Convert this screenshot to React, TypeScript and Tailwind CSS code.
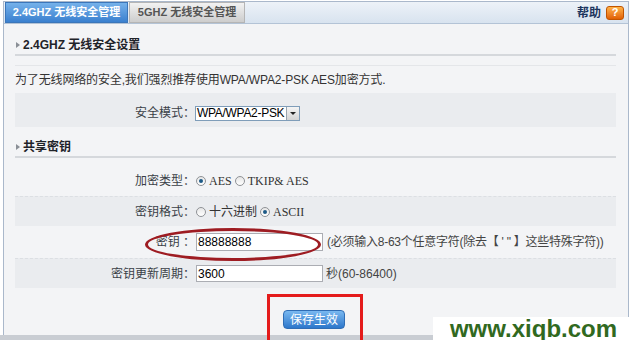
import React from "react";

const Radio: React.FC<{ checked?: boolean }> = ({ checked }) => (
  <span className="inline-flex h-[10px] w-[10px] items-center justify-center rounded-full border border-[#8f9296] bg-gradient-to-b from-[#e6e6e6] to-[#ffffff]">
    {checked && <span className="h-[4px] w-[4px] rounded-full bg-[#1d5a87]" />}
  </span>
);

const SectionTitle: React.FC<{ title: string }> = ({ title }) => (
  <div className="flex h-[18px] items-center gap-[3px] border-b-2 border-[#d5d8dc] pb-[2px] pl-[1px]">
    <span className="h-0 w-0 border-y-[3px] border-l-[4px] border-y-transparent border-l-[#8a8f96]" />
    <span className="font-bold text-[12px] text-[#1f2329]">{title}</span>
  </div>
);

const Row: React.FC<{ label: string; dark?: boolean; h: string; children: React.ReactNode }> = ({ label, dark, h, children }) => (
  <div className={`flex items-center ${h} ${dark ? "bg-[#eaecef] border-t border-dashed border-[#dcdfe3]" : ""}`}>
    <div className="w-[180px] shrink-0 text-right text-[#3a3f47]">{label}</div>
    <div className="flex items-center gap-[3px] pl-[1px]">{children}</div>
  </div>
);

const App: React.FC = () => {
  return (
    <div className="relative h-[340px] w-[634px] overflow-hidden bg-white font-['Liberation_Sans','Noto_Sans_CJK_SC',sans-serif] text-[12px] text-[#333]">
      <div className="ml-[3px] mt-[1px] w-[626px] border-x border-t border-[#aab8cb]">
        {/* tab bar */}
        <div className="flex h-[22px] items-end justify-between border-b border-[#b3c3d6] bg-gradient-to-b from-[#edf2f8] to-[#d8e3ef] pl-[1px] pr-[4px]">
          <div className="flex gap-[1px]">
            <div className="flex h-[21px] w-[123px] items-center justify-center border border-[#3b76ba] bg-gradient-to-b from-[#75b1ea] to-[#3a80cf] text-[11px] font-bold text-white">
              2.4GHZ 无线安全管理
            </div>
            <div className="flex h-[21px] w-[116px] items-center justify-center border border-[#b5b5b5] bg-gradient-to-b from-[#f2f2f2] to-[#cdcdcd] text-[11px] font-bold text-[#555]">
              5GHZ 无线安全管理
            </div>
          </div>
          <div className="flex items-center gap-[5px] self-center">
            <span className="font-bold text-[#1c355e]">帮助</span>
            <span className="flex h-[14px] w-[18px] items-center justify-center rounded-[3px] border border-[#c15400] bg-gradient-to-b from-[#ffb347] to-[#e06000] text-[11px] font-bold leading-none text-white">
              ?
            </span>
          </div>
        </div>

        {/* body */}
        <div className="h-[311px] bg-[#f3f4f6] pl-[11px] pr-[12px] pt-[14px]">
          <SectionTitle title="2.4GHZ 无线安全设置" />
          <div className="mt-[9px] border-t border-[#e4e6e9]" />
          <div className="mt-[6px] h-[16px] leading-[16px] tracking-[-0.15px]">为了无线网络的安全,我们强烈推荐使用WPA/WPA2-PSK AES加密方式.</div>

          <div className="mt-[5px] flex h-[34px] items-center bg-[#eaecef] pt-[6px]">
            <div className="w-[180px] shrink-0 text-right text-[#3a3f47]">安全模式：</div>
            <div className="flex h-[15px] w-[105px] items-center justify-between overflow-hidden border border-[#7f9db9] bg-white pl-[1px]">
              <span className="whitespace-nowrap text-[12px] leading-none tracking-[-0.3px] text-black">WPA/WPA2-PSK</span>
              <span className="flex h-[13px] w-[13px] shrink-0 items-center justify-center border-l border-[#9aa4ad] bg-gradient-to-b from-[#f4f4f4] to-[#d4d4d4]">
                <span className="h-0 w-0 border-x-[3px] border-t-[3px] border-x-transparent border-t-[#222]" />
              </span>
            </div>
          </div>

          <div className="mt-[13px]">
            <SectionTitle title="共享密钥" />
          </div>

          <div className="mt-[7px]">
            <Row label="加密类型：" h="h-[31px]">
              <Radio checked />
              <span className="font-['Liberation_Serif',serif] text-[#333]">AES</span>
              <Radio />
              <span className="font-['Liberation_Serif',serif] text-[#333]">TKIP&amp; AES</span>
            </Row>
            <Row label="密钥格式：" dark h="h-[30px]">
              <Radio />
              <span className="text-[#333]">十六进制</span>
              <Radio checked />
              <span className="font-['Liberation_Serif',serif] text-[#333]">ASCII</span>
            </Row>
            <Row label="密钥 ：" h="h-[32px]">
              <div className="flex h-[18px] w-[127px] items-center border border-[#abadb3] bg-white pl-[1px] text-black">88888888</div>
              <span className="whitespace-nowrap pl-[1px] tracking-[-0.25px] text-[#444]">{"(必须输入8-63个任意字符(除去【 ' \" 】这些特殊字符))"}</span>
            </Row>
            <Row label="密钥更新周期：" dark h="h-[30px]">
              <div className="flex h-[17px] w-[127px] items-center border border-[#abadb3] bg-white pl-[1px] text-black">3600</div>
              <span className="text-[#444]">秒(60-86400)</span>
            </Row>
          </div>

          <div className="flex justify-center pr-[3px] pt-[22px]">
            <button className="h-[19px] w-[62px] rounded-[4px] border border-[#2f6db5] bg-gradient-to-b from-[#79b8f0] to-[#2c77cb] text-[12px] leading-none text-white">
              保存生效
            </button>
          </div>
        </div>
      </div>
      <div className="h-[6px] bg-[#c9cdd3]" />

      {/* annotations over the screenshot */}
      <div className="absolute left-[145px] top-[228px] h-[33px] w-[176px] rounded-[50%] border-[3px] border-[#9e1c22]" />
      <div className="absolute left-[267px] top-[294px] h-[50px] w-[96px] border-[3px] border-[#e41b1b]" />
      <div className="absolute left-[433px] top-[317px] flex h-[23px] w-[201px] items-center justify-center bg-white text-[24px] font-bold leading-none text-[#31691f]">
        www.xiqb.com
      </div>
    </div>
  );
};

export default App;
